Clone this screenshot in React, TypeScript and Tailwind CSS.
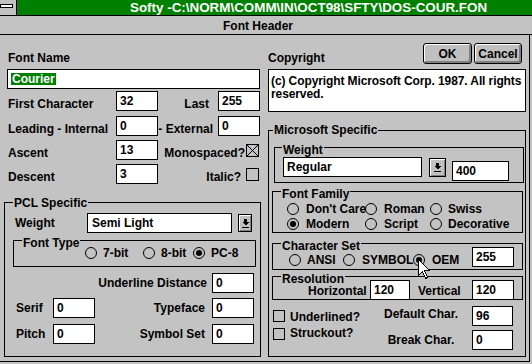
import type { ReactNode } from 'react'

function Field({ value, className = '' }: { value: string; className?: string }) {
  return (
    <div className={`flex h-[20px] shrink-0 items-center border border-black bg-white ${className}`}>
      <span className="pl-[3px]">{value}</span>
    </div>
  )
}

function Check({ checked, className = '' }: { checked?: boolean; className?: string }) {
  return (
    <span className={`flex shrink-0 border border-black ${className}`}>
      {checked && (
        <svg className="h-full w-full" viewBox="0 0 11 11" preserveAspectRatio="none">
          <path d="M0 0L11 11M11 0L0 11" stroke="#000" strokeWidth="1" />
        </svg>
      )}
    </span>
  )
}

function Radio({ checked }: { checked?: boolean }) {
  return (
    <span className="flex h-[12px] w-[12px] shrink-0 items-center justify-center rounded-full border border-black">
      {checked && <span className="h-[6px] w-[6px] rounded-full bg-black" />}
    </span>
  )
}

function Option({ label, checked, className = '' }: { label: string; checked?: boolean; className?: string }) {
  return (
    <span className={`flex shrink-0 items-center gap-[6px] whitespace-nowrap ${className}`}>
      <Radio checked={checked} />
      <span>{label}</span>
    </span>
  )
}

function Group({
  title,
  className = '',
  legend = '',
  children,
}: {
  title: string
  className?: string
  legend?: string
  children: ReactNode
}) {
  return (
    <fieldset className={`shrink-0 border border-black ${className}`}>
      <legend className={`px-[1px] leading-[14px] ${legend}`}>{title}</legend>
      {children}
    </fieldset>
  )
}

function DropButton({ className = '' }: { className?: string }) {
  return (
    <div
      className={`flex shrink-0 items-center justify-center border border-black bg-[#c0c0c0] shadow-[inset_1px_1px_0_#fff,inset_-1px_-1px_0_#808080] ${className}`}
    >
      <svg width="7" height="9" viewBox="0 0 7 9" shapeRendering="crispEdges">
        <rect x="2" y="0" width="3" height="3" fill="#000" />
        <path d="M0 3H7L3.5 6.5Z" fill="#000" />
        <rect x="0" y="8" width="7" height="1" fill="#000" />
      </svg>
    </div>
  )
}

function PushButton({ label, className = '' }: { label: string; className?: string }) {
  return (
    <div
      className={`flex h-[21px] shrink-0 items-center justify-center rounded-[3px] border border-black bg-[#c0c0c0] shadow-[inset_1px_1px_0_#fff,inset_-2px_-2px_0_#808080] ${className}`}
    >
      {label}
    </div>
  )
}

function LeftColumn() {
  return (
    <div className="flex w-[257px] shrink-0 flex-col">
      <div className="mt-[16px] pl-[4px]">Font Name</div>
      <div className="ml-[3px] mt-[4px] flex h-[20px] w-[253px] items-center border border-black bg-white pl-[3px]">
        <span className="bg-[#008000] px-[1px] leading-[12px] text-white">Courier</span>
      </div>

      <div className="mt-[2px] flex h-[20px] items-start">
        <span className="w-[112px] shrink-0 pl-[4px] pt-[6px]">First Character</span>
        <Field value="32" className="w-[42px]" />
        <span className="w-[60px] shrink-0 pr-[9px] pt-[6px] text-right">Last</span>
        <Field value="255" className="w-[42px]" />
      </div>

      <div className="mt-[5px] flex h-[20px] items-start">
        <span className="w-[112px] shrink-0 whitespace-nowrap pl-[4px] pt-[6px]">Leading - Internal</span>
        <Field value="0" className="w-[42px]" />
        <span className="w-[60px] shrink-0 whitespace-nowrap pr-[5px] pt-[6px] text-right">- External</span>
        <Field value="0" className="w-[42px]" />
      </div>

      <div className="mt-[4px] flex h-[20px] items-start">
        <span className="w-[112px] shrink-0 pl-[4px] pt-[6px]">Ascent</span>
        <Field value="13" className="w-[42px]" />
        <span className="flex flex-1 justify-end gap-[1px] pr-[2px]">
          <span className="pt-[6px]">Monospaced?</span>
          <Check checked className="mt-[4px] h-[13px] w-[13px]" />
        </span>
      </div>

      <div className="mt-[4px] flex h-[20px] items-start">
        <span className="w-[112px] shrink-0 pl-[4px] pt-[6px]">Descent</span>
        <Field value="3" className="w-[42px]" />
        <span className="flex flex-1 justify-end gap-[5px] pr-[2px]">
          <span className="pt-[6px]">Italic?</span>
          <Check className="mt-[4px] h-[13px] w-[13px]" />
        </span>
      </div>

      <Group title="PCL Specific" className="mt-[10px] pb-[12px]" legend="ml-[8px] pt-[2px]">
        <div className="mt-[3px] flex h-[20px] items-center">
          <span className="w-[82px] shrink-0 pl-[10px]">Weight</span>
          <div className="flex h-[20px] w-[145px] shrink-0 items-center border border-black bg-white pl-[4px]">
            Semi Light
          </div>
          <DropButton className="ml-[6px] h-[18px] w-[14px]" />
        </div>

        <Group title="Font Type" className="-mt-[3px] ml-[8px] w-[243px] pb-[6px]" legend="ml-[8px] pt-[6px]">
          <div className="-mt-[4px] flex h-[14px] items-center pl-[71px]">
            <Option label="7-bit" className="w-[58px]" />
            <Option label="8-bit" className="w-[50px]" />
            <Option label="PC-8" checked />
          </div>
        </Group>

        <div className="mt-[6px] flex h-[20px] items-center justify-end pr-[6px]">
          <span className="mr-[5px]">Underline Distance</span>
          <Field value="0" className="w-[42px]" />
        </div>

        <div className="mt-[5px] flex h-[20px] items-center pr-[6px]">
          <span className="w-[48px] shrink-0 pl-[11px]">Serif</span>
          <Field value="0" className="w-[42px]" />
          <span className="ml-auto mr-[7px]">Typeface</span>
          <Field value="0" className="w-[42px]" />
        </div>

        <div className="mt-[6px] flex h-[20px] items-center pr-[6px]">
          <span className="w-[48px] shrink-0 pl-[11px]">Pitch</span>
          <Field value="0" className="w-[42px]" />
          <span className="ml-auto mr-[7px]">Symbol Set</span>
          <Field value="0" className="w-[42px]" />
        </div>
      </Group>
    </div>
  )
}

function RightColumn() {
  return (
    <div className="flex w-[258px] shrink-0 flex-col">
      <div className="mt-[8px] flex h-[21px] items-start">
        <span className="mt-[8px]">Copyright</span>
        <div className="ml-auto mr-[4px] flex gap-[2px]">
          <PushButton label="OK" className="w-[49px]" />
          <PushButton label="Cancel" className="w-[48px]" />
        </div>
      </div>

      <div className="mt-[5px] h-[43px] whitespace-nowrap border border-black bg-white pl-[2px] pt-[5px] leading-[13px] tracking-[-0.1px]">
        (c) Copyright Microsoft Corp. 1987. All rights
        <br />
        reserved.
      </div>

      <Group title="Microsoft Specific" className="mt-[11px] pb-[9px]" legend="ml-[4px]">
        <Group title="Weight" className="ml-[5px] w-[250px]" legend="ml-[7px] pt-[6px]">
          <div className="flex h-[25px] items-start pl-[8px]">
            <div className="flex h-[20px] w-[139px] shrink-0 items-center border border-black bg-white pl-[3px]">
              Regular
            </div>
            <DropButton className="ml-[7px] mt-[1px] h-[19px] w-[17px]" />
            <Field value="400" className="ml-[6px] mt-[4px] w-[57px]" />
          </div>
        </Group>

        <Group title="Font Family" className="-mt-[2px] ml-[3px] w-[251px] pb-[1px]" legend="ml-[8px] pt-[6px]">
          <div className="mt-[1px] grid grid-cols-[78px_65px_1fr] grid-rows-[14px_14px] gap-y-[1px] pl-[14px]">
            <Option label="Don't Care" className="gap-[7px]" />
            <Option label="Roman" className="gap-[7px]" />
            <Option label="Swiss" className="gap-[5px]" />
            <Option label="Modern" checked className="gap-[7px]" />
            <Option label="Script" className="gap-[7px]" />
            <Option label="Decorative" className="gap-[5px]" />
          </div>
        </Group>

        <Group title="Character Set" className="ml-[3px] w-[251px] pb-[2px]" legend="ml-[8px] pt-[6px]">
          <div className="flex h-[14px] items-center pl-[16px]">
            <Option label="ANSI" className="w-[54px]" />
            <Option label="SYMBOL" className="w-[70px] gap-[7px]" />
            <Option label="OEM" checked className="w-[59px] gap-[7px]" />
            <Field value="255" className="-mt-[6px] w-[42px] self-start" />
          </div>
        </Group>

        <Group title="Resolution" className="-mt-[4px] ml-[3px] w-[251px]" legend="ml-[8px] pt-[6px]">
          <div className="flex h-[13px] items-start pl-[35px]">
            <span className="-mt-[2px] w-[62px] shrink-0">Horizontal</span>
            <Field value="120" className="-mt-[6px] h-[18px] w-[40px]" />
            <span className="-mt-[2px] ml-[8px] w-[54px] shrink-0">Vertical</span>
            <Field value="120" className="-mt-[6px] h-[18px] w-[42px]" />
          </div>
        </Group>

        <div className="mt-[6px] flex h-[17px] items-start pl-[4px]">
          <div className="flex w-[107px] shrink-0 items-start">
            <Check className="mt-[4px] h-[12px] w-[12px]" />
            <span className="ml-[5px] mt-[4px]">Underlined?</span>
          </div>
          <span className="mt-[1px] w-[82px] shrink-0 text-center">Default Char.</span>
          <Field value="96" className="ml-[10px] h-[17px] w-[41px]" />
        </div>

        <div className="mt-[3px] flex h-[21px] items-start pl-[4px]">
          <div className="flex w-[107px] shrink-0 items-start">
            <Check className="mt-[2px] h-[12px] w-[12px]" />
            <span className="ml-[5px]">Struckout?</span>
          </div>
          <span className="mt-[7px] w-[82px] shrink-0 text-center">Break Char.</span>
          <Field value="0" className="ml-[10px] mt-[4px] h-[17px] w-[41px]" />
        </div>
      </Group>
    </div>
  )
}

export default function App() {
  return (
    <div className="relative h-[364px] w-[532px] overflow-hidden bg-[#c3c3c3] font-['Liberation_Sans',Arial,sans-serif] text-[12px] font-bold leading-[14px] text-black">
      <div className="flex h-[16px] border-b border-black">
        <div className="w-[17px] shrink-0 border-r border-black pt-[4px]">
          <div className="h-[4px] w-[13px] border border-black bg-white" />
        </div>
        <div className="flex-1 whitespace-nowrap bg-[#008000] pl-[113px] text-[13.4px] leading-[15px] text-white">
          {'Softy -C:\\NORM\\COMM\\IN\\OCT98\\SFTY\\DOS-COUR.FON'}
        </div>
      </div>

      <div className="flex h-[19px] justify-center border-b border-black pr-[16px] pt-[3px]">Font Header</div>

      <div className="flex h-[327px] w-[530px] gap-[7px] border-b border-r border-black pl-[4px]">
        <LeftColumn />
        <RightColumn />
      </div>

      {/* mouse pointer over the OEM radio */}
      <svg
        className="absolute left-[418px] top-[259px]"
        width="13"
        height="21"
        viewBox="0 0 13 21"
        shapeRendering="crispEdges"
      >
        <path d="M0.5 0.5V16.5L4.5 12.5L7.5 19.5L9.5 18.5L6.5 11.5H11.5Z" fill="#fff" stroke="#000" />
      </svg>
    </div>
  )
}
